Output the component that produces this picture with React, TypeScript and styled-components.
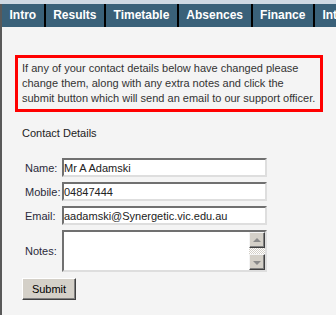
import { Fragment } from "react";
import styled, { createGlobalStyle } from "styled-components";

const GlobalStyle = createGlobalStyle`
  html, body {
    margin: 0;
    padding: 0;
    background: #f4f4f4;
  }
  body {
    font-family: "Liberation Sans", Arial, sans-serif;
    font-size: 11px;
    color: #222;
  }
`;

const Page = styled.div`
  min-height: 100vh;
  display: flex;
  flex-direction: column;
`;

const TopStrip = styled.div`
  height: 4px;
  background: #cfd9e3;
  flex: none;
`;

const Frame = styled.div`
  flex: 1;
  border-left: 2px solid #595959;
  background: #f4f4f4;
`;

const TabBar = styled.div`
  display: flex;
  height: 23px;
  overflow: hidden;
  white-space: nowrap;
`;

const Tab = styled.div`
  flex: none;
  padding: 0 7.5px;
  line-height: 23px;
  font-size: 12px;
  font-weight: bold;
  color: #fff;
  background: #3a6179;
  border-right: 2px solid #000;
  cursor: pointer;
`;

const Content = styled.div`
  padding: 28px 0 0 13px;
`;

const Notice = styled.div`
  box-sizing: border-box;
  width: 308px;
  border: 3px solid #ff0000;
  padding: 3px 4px;
  line-height: 15px;
  white-space: nowrap;
  color: #333;
`;

const SectionTitle = styled.div`
  margin: 14px 0 0 7px;
  line-height: 14px;
  color: #222;
`;

const FormGrid = styled.div`
  display: grid;
  grid-template-columns: 33px 205px;
  column-gap: 4px;
  row-gap: 5px;
  align-items: center;
  margin: 18px 0 0 10px;
`;

const Label = styled.label`
  color: #2a2a3a;
  white-space: nowrap;
`;

const insetBorder = `
  box-sizing: border-box;
  border-style: solid;
  border-width: 2px;
  border-color: #707070 #dedede #dedede #707070;
  background: #fff;
`;

const TextInput = styled.input`
  ${insetBorder}
  height: 19px;
  width: 205px;
  padding: 0;
  margin: 0;
  font-family: "Liberation Sans", Arial, sans-serif;
  font-size: 11px;
  color: #222;
  outline: none;
`;

const NotesBox = styled.div`
  ${insetBorder}
  display: flex;
  height: 42px;
  width: 205px;
`;

const NotesArea = styled.textarea`
  flex: 1;
  border: none;
  margin: 0;
  padding: 1px;
  resize: none;
  outline: none;
  overflow: hidden;
  font-family: "Liberation Sans", Arial, sans-serif;
  font-size: 11px;
`;

const Scrollbar = styled.div`
  flex: none;
  width: 16px;
  display: flex;
  flex-direction: column;
`;

const ScrollButton = styled.div<{ $dir: "up" | "down" }>`
  box-sizing: border-box;
  height: 16px;
  background: #d4d0c8;
  border-style: solid;
  border-width: 1px;
  border-color: #f4f4f4 #404040 #404040 #f4f4f4;
  box-shadow: inset -1px -1px #808080;
  display: flex;
  align-items: center;
  justify-content: center;

  &::after {
    content: "";
    width: 0;
    height: 0;
    border-left: 4px solid transparent;
    border-right: 4px solid transparent;
    ${(p) =>
      p.$dir === "up"
        ? "border-bottom: 4px solid #8a8a8a; margin-top: -1px;"
        : "border-top: 4px solid #8a8a8a; margin-top: 1px;"}
  }
`;

const ScrollTrack = styled.div`
  flex: 1;
  background-color: #fff;
  background-image: repeating-conic-gradient(#d4d0c8 0 25%, #fff 0 50%);
  background-size: 2px 2px;
`;

const SubmitButton = styled.button`
  box-sizing: border-box;
  display: block;
  width: 54px;
  height: 22px;
  margin: 6px 0 0 7px;
  padding: 0;
  background: #d4d0c8;
  border-style: solid;
  border-width: 1px;
  border-color: #fff #404040 #404040 #fff;
  box-shadow: inset -1px -1px #808080;
  font-family: "Liberation Sans", Arial, sans-serif;
  font-size: 11px;
  color: #000;
  cursor: pointer;
`;

const tabs = ["Intro", "Results", "Timetable", "Absences", "Finance", "Interviews"];

const fields = [
  { label: "Name:", value: "Mr A Adamski" },
  { label: "Mobile:", value: "04847444" },
  { label: "Email:", value: "aadamski@Synergetic.vic.edu.au" },
];

export default function App() {
  return (
    <Page>
      <GlobalStyle />
      <TopStrip />
      <Frame>
        <TabBar>
          {tabs.map((t) => (
            <Tab key={t}>{t}</Tab>
          ))}
        </TabBar>
        <Content>
          <Notice>
            If any of your contact details below have changed please
            <br />
            change them, along with any extra notes and click the
            <br />
            submit button which will send an email to our support officer.
          </Notice>
          <SectionTitle>Contact Details</SectionTitle>
          <FormGrid>
            {fields.map((f) => (
              <Fragment key={f.label}>
                <Label>{f.label}</Label>
                <TextInput defaultValue={f.value} />
              </Fragment>
            ))}
            <Label>Notes:</Label>
            <NotesBox>
              <NotesArea />
              <Scrollbar>
                <ScrollButton $dir="up" />
                <ScrollTrack />
                <ScrollButton $dir="down" />
              </Scrollbar>
            </NotesBox>
          </FormGrid>
          <SubmitButton>Submit</SubmitButton>
        </Content>
      </Frame>
    </Page>
  );
}
